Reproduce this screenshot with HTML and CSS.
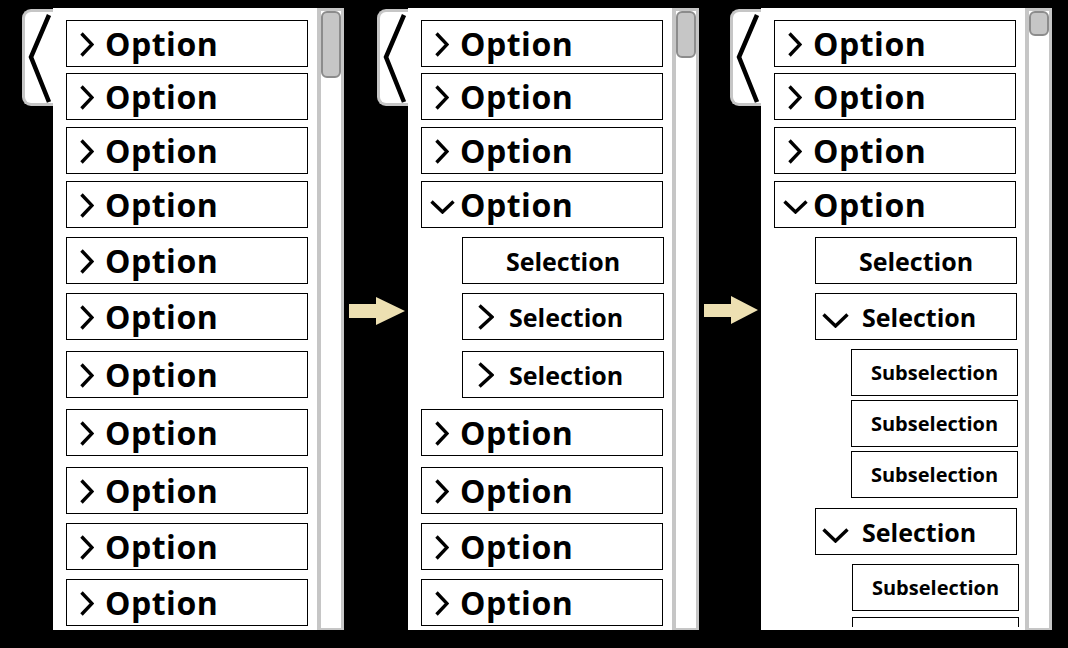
FILE: index.html
```html
<!DOCTYPE html>
<html>
<head>
<meta charset="utf-8">
<link rel="stylesheet" href="styles.css">
</head>
<body>
<div class="stage">

  <section class="panel">
    <div class="tab"><svg width="28" height="91" viewBox="0 0 28 91"><polyline points="24,3 6,45 24,90"/></svg></div>
    <div class="list">
      <div class="item opt"><svg class="ic-r" width="14" height="25" viewBox="0 0 14 25"><polyline points="1.5,1.5 12,12.5 1.5,23.5"/></svg><span>Option</span></div>
      <div class="item opt mt6"><svg class="ic-r" width="14" height="25" viewBox="0 0 14 25"><polyline points="1.5,1.5 12,12.5 1.5,23.5"/></svg><span>Option</span></div>
      <div class="item opt mt7"><svg class="ic-r" width="14" height="25" viewBox="0 0 14 25"><polyline points="1.5,1.5 12,12.5 1.5,23.5"/></svg><span>Option</span></div>
      <div class="item opt mt7"><svg class="ic-r" width="14" height="25" viewBox="0 0 14 25"><polyline points="1.5,1.5 12,12.5 1.5,23.5"/></svg><span>Option</span></div>
      <div class="item opt mt9"><svg class="ic-r" width="14" height="25" viewBox="0 0 14 25"><polyline points="1.5,1.5 12,12.5 1.5,23.5"/></svg><span>Option</span></div>
      <div class="item opt mt9"><svg class="ic-r" width="14" height="25" viewBox="0 0 14 25"><polyline points="1.5,1.5 12,12.5 1.5,23.5"/></svg><span>Option</span></div>
      <div class="item opt mt11"><svg class="ic-r" width="14" height="25" viewBox="0 0 14 25"><polyline points="1.5,1.5 12,12.5 1.5,23.5"/></svg><span>Option</span></div>
      <div class="item opt mt11"><svg class="ic-r" width="14" height="25" viewBox="0 0 14 25"><polyline points="1.5,1.5 12,12.5 1.5,23.5"/></svg><span>Option</span></div>
      <div class="item opt mt11"><svg class="ic-r" width="14" height="25" viewBox="0 0 14 25"><polyline points="1.5,1.5 12,12.5 1.5,23.5"/></svg><span>Option</span></div>
      <div class="item opt mt9"><svg class="ic-r" width="14" height="25" viewBox="0 0 14 25"><polyline points="1.5,1.5 12,12.5 1.5,23.5"/></svg><span>Option</span></div>
      <div class="item opt mt9"><svg class="ic-r" width="14" height="25" viewBox="0 0 14 25"><polyline points="1.5,1.5 12,12.5 1.5,23.5"/></svg><span>Option</span></div>
    </div>
    <div class="scroll"><div class="thumb th1"></div></div>
  </section>

  <div class="arrow"><svg width="56" height="28" viewBox="0 0 56 28"><polygon points="0,7 27,7 27,0 56,14 27,28 27,21 0,21"/></svg></div>

  <section class="panel">
    <div class="tab"><svg width="28" height="91" viewBox="0 0 28 91"><polyline points="24,3 6,45 24,90"/></svg></div>
    <div class="list">
      <div class="item opt"><svg class="ic-r" width="14" height="25" viewBox="0 0 14 25"><polyline points="1.5,1.5 12,12.5 1.5,23.5"/></svg><span>Option</span></div>
      <div class="item opt mt6"><svg class="ic-r" width="14" height="25" viewBox="0 0 14 25"><polyline points="1.5,1.5 12,12.5 1.5,23.5"/></svg><span>Option</span></div>
      <div class="item opt mt7"><svg class="ic-r" width="14" height="25" viewBox="0 0 14 25"><polyline points="1.5,1.5 12,12.5 1.5,23.5"/></svg><span>Option</span></div>
      <div class="item opt mt7"><svg class="ic-d" width="25" height="14" viewBox="0 0 25 14"><polyline points="1.5,1.5 12.5,12 23.5,1.5"/></svg><span>Option</span></div>
      <div class="item sel plain mt9"><span>Selection</span></div>
      <div class="item sel mt9"><svg class="ic-r" width="16" height="26" viewBox="0 0 16 26"><polyline points="1.5,1.5 14,13 1.5,24.5"/></svg><span>Selection</span></div>
      <div class="item sel mt11"><svg class="ic-r" width="16" height="26" viewBox="0 0 16 26"><polyline points="1.5,1.5 14,13 1.5,24.5"/></svg><span>Selection</span></div>
      <div class="item opt mt11"><svg class="ic-r" width="14" height="25" viewBox="0 0 14 25"><polyline points="1.5,1.5 12,12.5 1.5,23.5"/></svg><span>Option</span></div>
      <div class="item opt mt11"><svg class="ic-r" width="14" height="25" viewBox="0 0 14 25"><polyline points="1.5,1.5 12,12.5 1.5,23.5"/></svg><span>Option</span></div>
      <div class="item opt mt9"><svg class="ic-r" width="14" height="25" viewBox="0 0 14 25"><polyline points="1.5,1.5 12,12.5 1.5,23.5"/></svg><span>Option</span></div>
      <div class="item opt mt9"><svg class="ic-r" width="14" height="25" viewBox="0 0 14 25"><polyline points="1.5,1.5 12,12.5 1.5,23.5"/></svg><span>Option</span></div>
    </div>
    <div class="scroll"><div class="thumb th2"></div></div>
  </section>

  <div class="arrow arrow-b"><svg width="54" height="28" viewBox="0 0 54 28"><polygon points="0,8 27,8 27,0 54,14 27,28 27,21 0,21"/></svg></div>

  <section class="panel">
    <div class="tab"><svg width="28" height="91" viewBox="0 0 28 91"><polyline points="24,3 6,45 24,90"/></svg></div>
    <div class="list">
      <div class="item opt"><svg class="ic-r" width="14" height="25" viewBox="0 0 14 25"><polyline points="1.5,1.5 12,12.5 1.5,23.5"/></svg><span>Option</span></div>
      <div class="item opt mt6"><svg class="ic-r" width="14" height="25" viewBox="0 0 14 25"><polyline points="1.5,1.5 12,12.5 1.5,23.5"/></svg><span>Option</span></div>
      <div class="item opt mt7"><svg class="ic-r" width="14" height="25" viewBox="0 0 14 25"><polyline points="1.5,1.5 12,12.5 1.5,23.5"/></svg><span>Option</span></div>
      <div class="item opt mt7"><svg class="ic-d" width="25" height="14" viewBox="0 0 25 14"><polyline points="1.5,1.5 12.5,12 23.5,1.5"/></svg><span>Option</span></div>
      <div class="item sel plain mt9"><span>Selection</span></div>
      <div class="item sel mt9"><svg class="ic-d" width="27" height="15" viewBox="0 0 27 15"><polyline points="1.5,1.5 13.5,13 25.5,1.5"/></svg><span>Selection</span></div>
      <div class="item sub mt9"><span>Subselection</span></div>
      <div class="item sub mt4"><span>Subselection</span></div>
      <div class="item sub mt4"><span>Subselection</span></div>
      <div class="item sel mt10"><svg class="ic-d" width="27" height="15" viewBox="0 0 27 15"><polyline points="1.5,1.5 13.5,13 25.5,1.5"/></svg><span>Selection</span></div>
      <div class="item sub sub-b mt9"><span>Subselection</span></div>
      <div class="item sub sub-b mt6"></div>
    </div>
    <div class="scroll"><div class="thumb th3"></div></div>
  </section>

</div>
</body>
</html>
```

FILE: styles.css
```css
html, body {
  margin: 0;
  padding: 0;
  background: #000;
  width: 1068px;
  height: 648px;
  overflow: hidden;
}

.stage {
  display: flex;
  align-items: flex-start;
  padding: 8px 0 0 53px;
  font-family: "Open Sans", "Noto Sans", sans-serif;
  font-weight: 700;
  color: #000;
}

.panel {
  position: relative;
  display: flex;
  height: 622px;
}

.tab {
  position: absolute;
  left: -31px;
  top: 1px;
  width: 31px;
  height: 97px;
  box-sizing: border-box;
  border: 3px solid #c6c6c6;
  border-right: none;
  border-radius: 9px 0 0 9px;
  background: #fff;
}

.tab svg {
  display: block;
}

.tab polyline {
  fill: none;
  stroke: #000;
  stroke-width: 4.5;
  stroke-linejoin: miter;
}

.list {
  width: 264px;
  height: 622px;
  box-sizing: border-box;
  padding: 12px 0 0 13px;
  border-bottom: 3px solid #fff;
  background: #fff;
  overflow: hidden;
  display: flex;
  flex-direction: column;
}

.item {
  flex-shrink: 0;
  box-sizing: border-box;
  height: 47px;
  border: 1px solid #000;
  display: flex;
  align-items: center;
  white-space: nowrap;
}

.item svg {
  display: block;
  flex-shrink: 0;
}

.item polyline {
  fill: none;
  stroke: #000;
  stroke-width: 3.4;
  stroke-linejoin: miter;
}

.opt {
  width: 242px;
  font-size: 32px;
  letter-spacing: 0.5px;
}

.opt .ic-r {
  margin: 2px 11px 0 13px;
}

.opt .ic-d {
  margin: 5px 5px 0 8px;
}

.sel {
  width: 202px;
  margin-left: 41px;
  font-size: 25px;
}

.sel .ic-r {
  margin: 0 15px 0 15px;
}

.sel .ic-d {
  margin: 8px 13px 0 6px;
}

.plain {
  justify-content: center;
}

.sub {
  width: 167px;
  margin-left: 77px;
  font-size: 20px;
  justify-content: center;
}

.sub-b {
  margin-left: 78px;
}

.mt4 { margin-top: 4px; }
.mt6 { margin-top: 6px; }
.mt7 { margin-top: 7px; }
.mt9 { margin-top: 9px; }
.mt10 { margin-top: 10px; }
.mt11 { margin-top: 11px; }

.scroll {
  width: 27px;
  height: 622px;
  box-sizing: border-box;
  border-style: solid;
  border-color: #c6c6c6;
  border-width: 3px 3px 2px 4px;
  background: #fff;
}

.thumb {
  box-sizing: border-box;
  width: 20px;
  border: 2px solid #8c8c8c;
  border-radius: 6px;
  background: #c6c6c6;
}

.th1 { height: 67px; }
.th2 { height: 47px; }
.th3 { height: 25px; }

.arrow {
  margin: 289px 3px 0 5px;
}

.arrow svg {
  display: block;
}

.arrow polygon {
  fill: #ede0b2;
}

.arrow-b {
  margin: 288px 3px 0 5px;
}
```
